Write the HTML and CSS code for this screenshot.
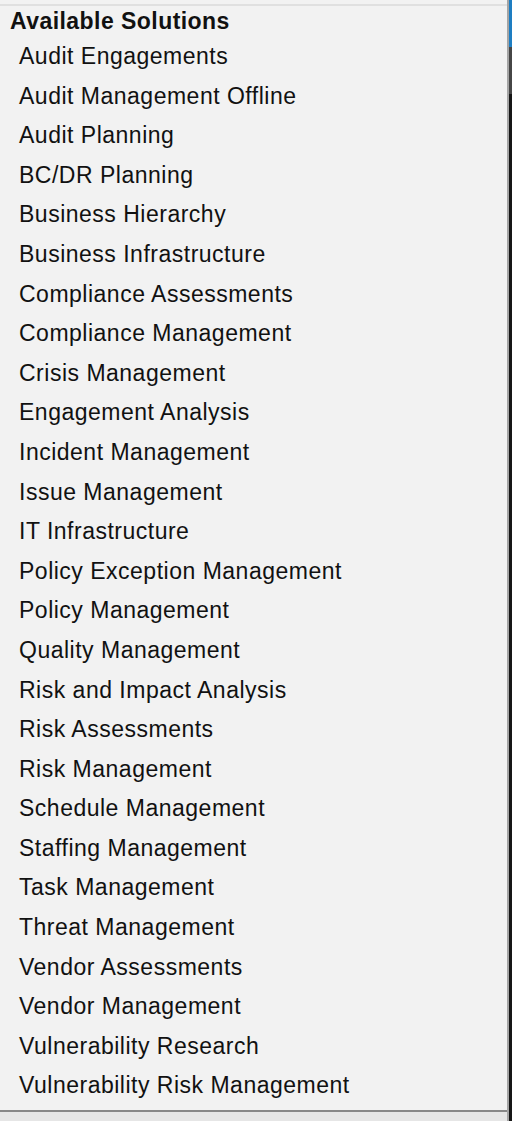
FILE: index.html
```html
<!DOCTYPE html>
<html lang="en">
<head>
    <meta charset="UTF-8">
    <title>Available Solutions</title>
    <link rel="stylesheet" href="styles.css">
</head>
<body>
    <div class="main">
        <div class="panel">
            <div class="group-title">Available Solutions</div>
            <ul class="solutions">
                <li>Audit Engagements</li>
                <li>Audit Management Offline</li>
                <li>Audit Planning</li>
                <li>BC/DR Planning</li>
                <li>Business Hierarchy</li>
                <li>Business Infrastructure</li>
                <li>Compliance Assessments</li>
                <li>Compliance Management</li>
                <li>Crisis Management</li>
                <li>Engagement Analysis</li>
                <li>Incident Management</li>
                <li>Issue Management</li>
                <li>IT Infrastructure</li>
                <li>Policy Exception Management</li>
                <li>Policy Management</li>
                <li>Quality Management</li>
                <li>Risk and Impact Analysis</li>
                <li>Risk Assessments</li>
                <li>Risk Management</li>
                <li>Schedule Management</li>
                <li>Staffing Management</li>
                <li>Task Management</li>
                <li>Threat Management</li>
                <li>Vendor Assessments</li>
                <li>Vendor Management</li>
                <li>Vulnerability Research</li>
                <li>Vulnerability Risk Management</li>
            </ul>
        </div>
        <div class="footer"></div>
    </div>
    <div class="edge"></div>
    <div class="side"></div>
</body>
</html>
```

FILE: styles.css
```css
html, body {
    height: 100%;
}

body {
    margin: 0;
    display: flex;
    background-color: #f2f2f2;
    font-family: "Liberation Sans", Arial, sans-serif;
    color: #111;
}

.main {
    flex: 1;
    display: flex;
    flex-direction: column;
    padding-top: 4px;
}

.panel {
    height: 1108px;
    box-sizing: border-box;
    padding-top: 1px;
    border-top: 2px solid #e0e0e0;
    border-bottom: 2px solid #888;
    background: #f2f2f2;
}

.group-title {
    font-weight: bold;
    font-size: 23px;
    line-height: 29px;
    letter-spacing: 0.45px;
    padding-left: 10px;
}

.solutions {
    list-style: none;
    margin: 0;
    padding: 1px 0 0 19px;
}

.solutions li {
    font-size: 23px;
    line-height: 39.6px;
    height: 39.6px;
    letter-spacing: 0.5px;
    white-space: nowrap;
}

.footer {
    flex: 1;
    background: #e6e6e6;
}

.edge {
    width: 2px;
    background: #a4a4a4;
}

.side {
    width: 3px;
    background: linear-gradient(#1e7ec2 0 47px, #464646 47px 94px, #161616 94px);
}
```
